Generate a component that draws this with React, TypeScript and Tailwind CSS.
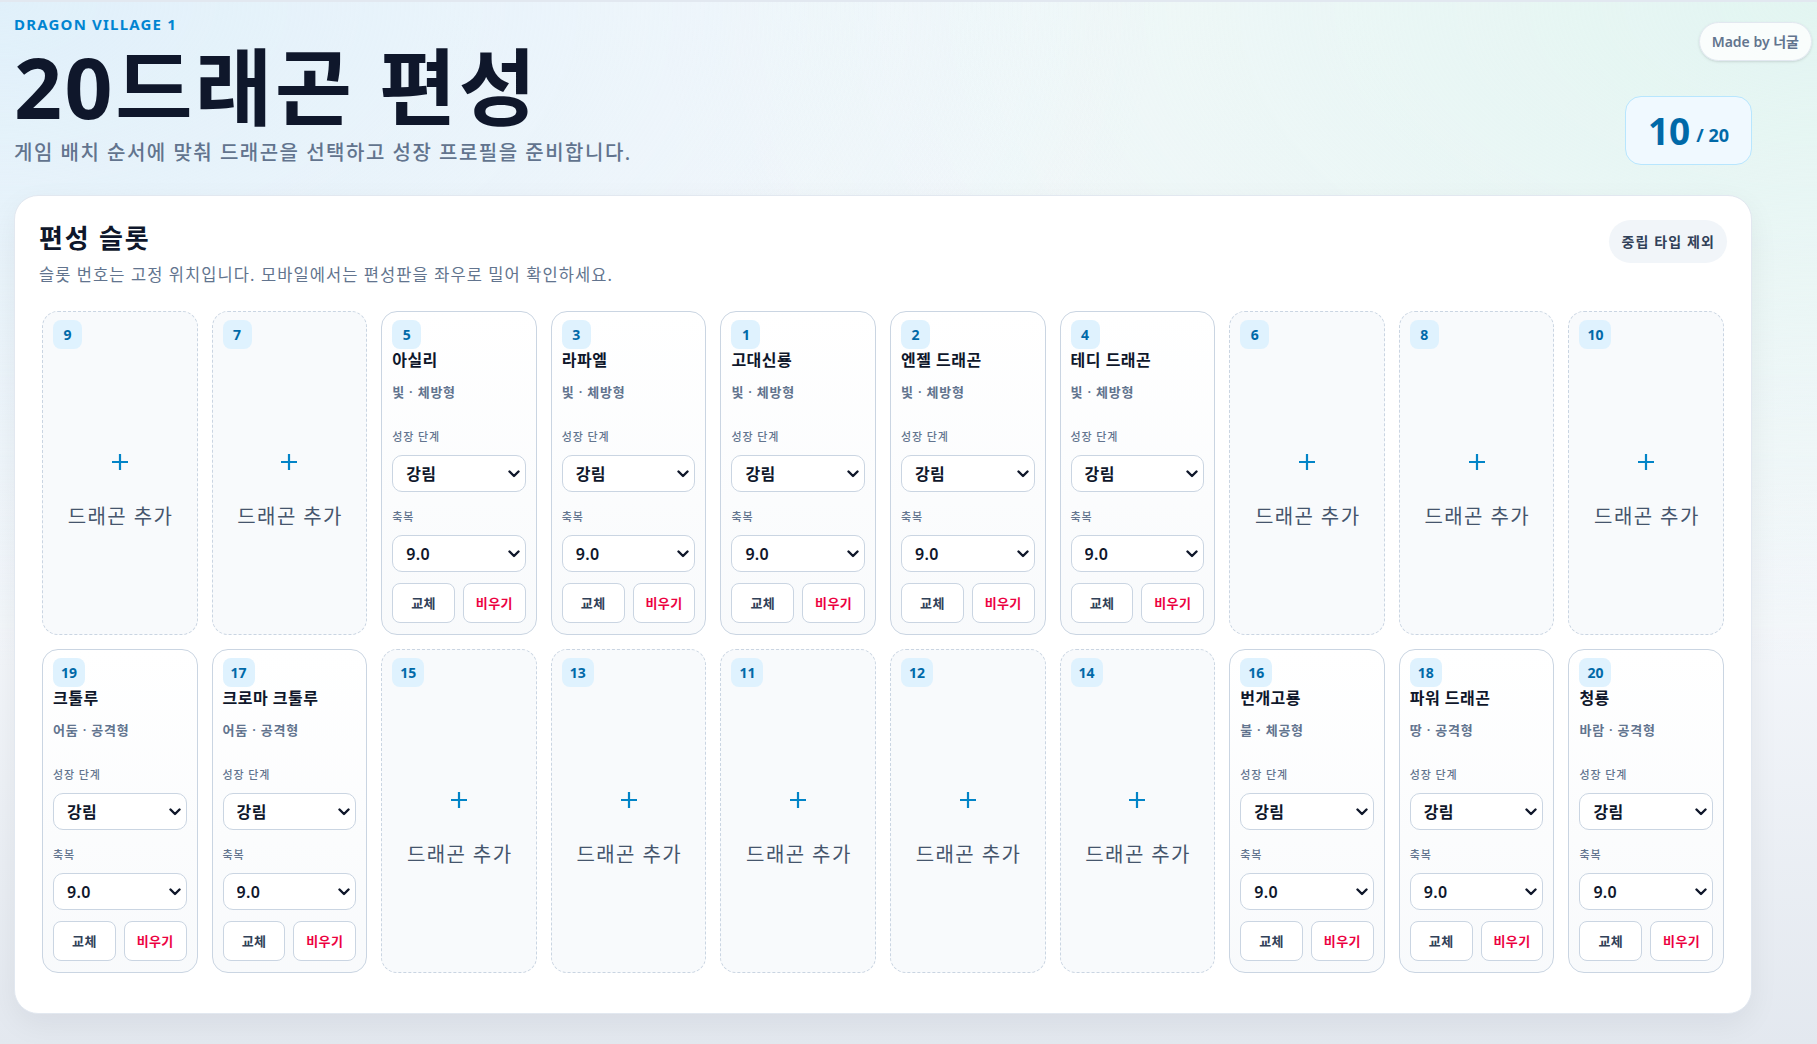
import { useState } from 'react'

type Dragon = { name: string; element: string; kind: string }

const FONT = "font-['Noto_Sans','Noto_Sans_CJK_KR',sans-serif]"

const roster: Record<number, Dragon> = {
  1: { name: '고대신룡', element: '빛', kind: '체방형' },
  2: { name: '엔젤 드래곤', element: '빛', kind: '체방형' },
  3: { name: '라파엘', element: '빛', kind: '체방형' },
  4: { name: '테디 드래곤', element: '빛', kind: '체방형' },
  5: { name: '아실리', element: '빛', kind: '체방형' },
  16: { name: '번개고룡', element: '불', kind: '체공형' },
  17: { name: '크로마 크툴루', element: '어둠', kind: '공격형' },
  18: { name: '파워 드래곤', element: '땅', kind: '공격형' },
  19: { name: '크툴루', element: '어둠', kind: '공격형' },
  20: { name: '청룡', element: '바람', kind: '공격형' },
}

// 게임 화면 배치 순서 (가운데가 1번)
const layout = [9, 7, 5, 3, 1, 2, 4, 6, 8, 10, 19, 17, 15, 13, 11, 12, 14, 16, 18, 20]

const stages = ['알', '해츨링', '성체', '강림']
const blessings = ['0.0', '1.0', '2.0', '3.0', '4.0', '5.0', '6.0', '7.0', '8.0', '9.0']

function Chevron() {
  return (
    <svg
      className="pointer-events-none absolute right-[6px] top-1/2 -translate-y-1/2"
      width="12"
      height="8"
      viewBox="0 0 12 8"
      fill="none"
    >
      <path d="M1.5 1.5L6 6l4.5-4.5" stroke="#0f172a" strokeWidth="2.4" strokeLinecap="round" strokeLinejoin="round" />
    </svg>
  )
}

function Picker({ value, options }: { value: string; options: string[] }) {
  const [v, setV] = useState(value)
  return (
    <div className="relative">
      <select
        value={v}
        onChange={(e) => setV(e.target.value)}
        className={`${FONT} h-[37px] w-full appearance-none rounded-[10px] border border-slate-300 bg-white pl-[13px] pr-6 text-[16px] font-semibold tracking-[0.02em] text-slate-900 outline-none`}
      >
        {options.map((o) => (
          <option key={o} value={o}>
            {o}
          </option>
        ))}
      </select>
      <Chevron />
    </div>
  )
}

function SlotBadge({ n }: { n: number }) {
  return (
    <span className="flex h-[29px] min-w-[29px] items-center justify-center self-start rounded-lg bg-sky-100 px-2 text-[14px] font-bold text-sky-700">
      {n}
    </span>
  )
}

function EmptySlot({ n }: { n: number }) {
  return (
    <div className="flex h-[324px] flex-col rounded-2xl border border-dashed border-slate-300 bg-slate-50 px-2.5 pt-2 pb-[11px]">
      <SlotBadge n={n} />
      <button className="flex flex-1 flex-col items-center justify-center gap-8 pt-3">
        <svg width="18" height="18" viewBox="0 0 18 18" fill="none">
          <path d="M9 1v16M1 9h16" stroke="#0284c7" strokeWidth="2.2" />
        </svg>
        <span className="pl-[0.07em] text-[20px] leading-7 tracking-[0.07em] text-slate-600">드래곤 추가</span>
      </button>
    </div>
  )
}

function FilledSlot({ n, dragon }: { n: number; dragon: Dragon }) {
  return (
    <div className="flex h-[324px] flex-col rounded-2xl border border-slate-300 bg-gradient-to-b from-white to-slate-50 px-2.5 pt-2 pb-[11px]">
      <SlotBadge n={n} />
      <div className="text-[16px] font-bold leading-[22px] tracking-[0.03em] text-slate-900">{dragon.name}</div>
      <div className="mt-3 text-[13px] font-semibold leading-[18px] tracking-[0.06em] text-slate-500">
        {dragon.element} · {dragon.kind}
      </div>

      <div className="mt-auto">
        <div className="text-[11px] font-medium leading-4 tracking-[0.08em] text-slate-500">성장 단계</div>
        <div className="mt-2.5">
          <Picker value="강림" options={stages} />
        </div>
        <div className="mt-[17px] text-[11px] font-medium leading-4 tracking-[0.08em] text-slate-500">축복</div>
        <div className="mt-2.5">
          <Picker value="9.0" options={blessings} />
        </div>
        <div className="mt-[11px] grid grid-cols-2 gap-2">
          <button className="h-10 rounded-lg border border-slate-300 bg-white text-[13px] font-bold tracking-[0.03em] text-slate-700">
            교체
          </button>
          <button className="h-10 rounded-lg border border-slate-300 bg-white text-[13px] font-semibold tracking-[0.03em] text-rose-600">
            비우기
          </button>
        </div>
      </div>
    </div>
  )
}

export default function App() {
  const filled = Object.keys(roster).length

  return (
    <div
      className={`${FONT} relative min-h-screen border-t-2 border-slate-200 bg-[radial-gradient(ellipse_at_0%_0%,#e0f0fa_0%,rgba(224,240,250,0)_45%),radial-gradient(ellipse_at_100%_0%,#e2f5f1_0%,rgba(226,245,241,0)_45%),linear-gradient(180deg,#f7f9fc_0%,#f3f6fa_60%,#e3e8ef_100%)] px-[14px] pt-3 pb-8`}
    >
      <div className="absolute top-[20px] right-[5px] flex h-[39px] items-center rounded-full border border-slate-200 bg-white/80 px-3 text-[14px] font-semibold text-slate-500 shadow-sm">
        Made by 너굴
      </div>

      <div className="max-w-[1738px]">
        <header className="flex items-end justify-between">
          <div>
            <div className="text-[15px] font-bold leading-5 tracking-[0.08em] text-sky-600">DRAGON VILLAGE 1</div>
            <h1 className="mt-[7px] text-[84px] font-bold leading-[1.1] tracking-[0.03em] text-slate-900">20드래곤 편성</h1>
            <p className="mt-[6px] text-[20px] font-medium leading-7 tracking-[0.075em] text-slate-500">
              게임 배치 순서에 맞춰 드래곤을 선택하고 성장 프로필을 준비합니다.
            </p>
          </div>
          <div className="mb-[2px] flex h-[69px] items-center rounded-2xl border border-sky-200 bg-sky-50 px-[22px] text-sky-700">
            <span className="text-[37px] font-bold leading-none">{filled}</span>
            <span className="ml-1.5 mt-2 text-[18px] font-bold leading-none">/ 20</span>
          </div>
        </header>

        <section className="mt-[28px] rounded-3xl border border-slate-200 bg-white p-6 shadow-[0_10px_30px_rgba(15,23,42,0.06)]">
          <div className="flex items-start justify-between">
            <div className="pt-px">
              <h2 className="text-[26px] font-bold leading-[34px] tracking-[0.07em] text-slate-900">편성 슬롯</h2>
              <p className="mt-[8px] text-[16.5px] leading-6 tracking-[0.065em] text-slate-500">
                슬롯 번호는 고정 위치입니다. 모바일에서는 편성판을 좌우로 밀어 확인하세요.
              </p>
            </div>
            <button className="h-[43px] rounded-full bg-slate-100 px-3 text-[14px] font-semibold tracking-[0.08em] text-slate-700">
              중립 타입 제외
            </button>
          </div>

          <div className="mt-[22px] overflow-x-auto px-[3px] pt-[2px] pb-[16px]">
            <div className="grid min-w-[1200px] grid-cols-10 gap-3.5">
              {layout.map((n) =>
                roster[n] ? <FilledSlot key={n} n={n} dragon={roster[n]} /> : <EmptySlot key={n} n={n} />,
              )}
            </div>
          </div>
        </section>
      </div>
    </div>
  )
}
